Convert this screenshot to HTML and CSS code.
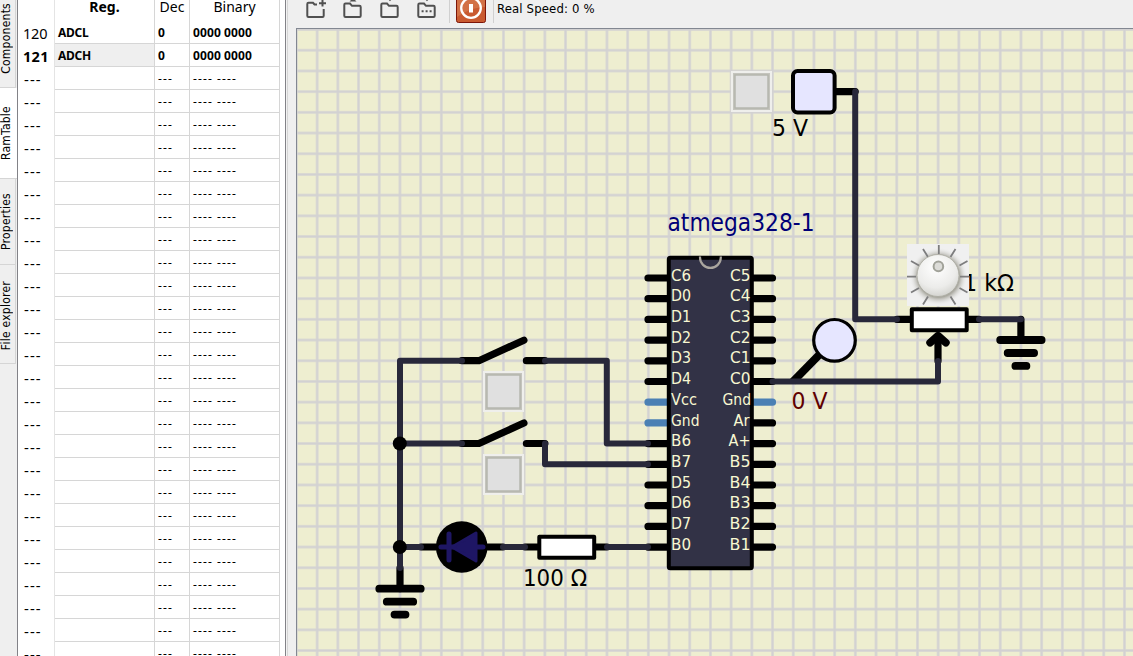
FILE: index.html
```html
<!DOCTYPE html>
<html lang="en">
<head>
<meta charset="utf-8">
<title>Circuit simulator</title>
<link rel="stylesheet" href="styles.css">
</head>
<body>
<div class="app">
  <nav class="tabs">
    <div class="tab components"><span>Components</span></div>
    <div class="tab active"><span>RamTable</span></div>
    <div class="tab properties"><span>Properties</span></div>
    <div class="tab files"><span>File explorer</span></div>
  </nav>
  <section class="ram">
    <div class="row head"><span></span><span class="strong">Reg.</span><span>Dec</span><span>Binary</span></div>
    <div class="row value"><span>120</span><span>ADCL</span><span>0</span><span>0000 0000</span></div>
    <div class="row value current"><span>121</span><span>ADCH</span><span>0</span><span>0000 0000</span></div>
    <div class="row"><span>---</span><span></span><span>---</span><span>---- ----</span></div>
    <div class="row"><span>---</span><span></span><span>---</span><span>---- ----</span></div>
    <div class="row"><span>---</span><span></span><span>---</span><span>---- ----</span></div>
    <div class="row"><span>---</span><span></span><span>---</span><span>---- ----</span></div>
    <div class="row"><span>---</span><span></span><span>---</span><span>---- ----</span></div>
    <div class="row"><span>---</span><span></span><span>---</span><span>---- ----</span></div>
    <div class="row"><span>---</span><span></span><span>---</span><span>---- ----</span></div>
    <div class="row"><span>---</span><span></span><span>---</span><span>---- ----</span></div>
    <div class="row"><span>---</span><span></span><span>---</span><span>---- ----</span></div>
    <div class="row"><span>---</span><span></span><span>---</span><span>---- ----</span></div>
    <div class="row"><span>---</span><span></span><span>---</span><span>---- ----</span></div>
    <div class="row"><span>---</span><span></span><span>---</span><span>---- ----</span></div>
    <div class="row"><span>---</span><span></span><span>---</span><span>---- ----</span></div>
    <div class="row"><span>---</span><span></span><span>---</span><span>---- ----</span></div>
    <div class="row"><span>---</span><span></span><span>---</span><span>---- ----</span></div>
    <div class="row"><span>---</span><span></span><span>---</span><span>---- ----</span></div>
    <div class="row"><span>---</span><span></span><span>---</span><span>---- ----</span></div>
    <div class="row"><span>---</span><span></span><span>---</span><span>---- ----</span></div>
    <div class="row"><span>---</span><span></span><span>---</span><span>---- ----</span></div>
    <div class="row"><span>---</span><span></span><span>---</span><span>---- ----</span></div>
    <div class="row"><span>---</span><span></span><span>---</span><span>---- ----</span></div>
    <div class="row"><span>---</span><span></span><span>---</span><span>---- ----</span></div>
    <div class="row"><span>---</span><span></span><span>---</span><span>---- ----</span></div>
    <div class="row"><span>---</span><span></span><span>---</span><span>---- ----</span></div>
    <div class="row"><span>---</span><span></span><span>---</span><span>---- ----</span></div>
    <div class="row"><span>---</span><span></span><span>---</span><span>---- ----</span></div>
  </section>
  <div class="splitter"></div>
  <main class="work">
    <header class="toolbar">
      <svg class="tool" viewBox="0 0 20 20"><path d="M11 4.5H8.5L7 2.8H2.5Q1.3 2.8 1.3 4V15.8Q1.3 17 2.5 17H16.5Q17.7 17 17.7 15.8V9M13 3.2H20M16.5 0V6.5"/></svg>
      <svg class="tool" viewBox="0 0 20 20"><path d="M2.5 3.5H7L9 5.8H16.5Q17.7 5.8 17.7 7V15.8Q17.7 17 16.5 17H2.5Q1.3 17 1.3 15.8V4.7Q1.3 3.5 2.5 3.5Z"/><path class="solid" d="M6.5 1.5L10 -2L13.5 1.5Z"/></svg>
      <svg class="tool" viewBox="0 0 20 20"><path d="M2.5 3.5H7L9 5.8H16.5Q17.7 5.8 17.7 7V15.8Q17.7 17 16.5 17H2.5Q1.3 17 1.3 15.8V4.7Q1.3 3.5 2.5 3.5Z"/><path class="solid" d="M8 -1H12L10 1.3Z"/></svg>
      <svg class="tool" viewBox="0 0 20 20"><path d="M2.5 3.5H7L9 5.8H16.5Q17.7 5.8 17.7 7V15.8Q17.7 17 16.5 17H2.5Q1.3 17 1.3 15.8V4.7Q1.3 3.5 2.5 3.5Z"/><path class="solid" d="M8 -1H12L10 1.3ZM4.6 10.3h2v2h-2ZM8.6 10.3h2v2h-2ZM12.6 10.3h2v2h-2Z"/></svg>
      <i class="divider"></i>
      <svg class="power" viewBox="0 0 30 23"><rect x=".5" y="-7" width="29" height="29.5" rx="2" fill="#c95a30" stroke="#7c1508"/><path d="M1 -6H29V7Q15 7 1 17Z" fill="#d98055" opacity=".6"/><circle cx="15" cy="8" r="9.8" fill="none" stroke="#fff" stroke-width="2.3"/><path d="M15 4V12.5" stroke="#fff" stroke-width="4"/></svg>
      <i class="divider second"></i>
      <span class="speed">Real Speed: 0 %</span>
    </header>
    <svg class="circuit" viewBox="297 29 836 627">
      <defs>
        <pattern id="grid" x="389.6" y="536.7" width="20.7" height="20.7" patternUnits="userSpaceOnUse">
          <path d="M10.35 0V20.7M0 10.35H20.7" stroke="#e3e2d2" stroke-width="3"/>
          <path d="M10.35 0V20.7M0 10.35H20.7" stroke="#d2d1d2" stroke-width="2"/>
        </pattern>
        <radialGradient id="dial" cx=".45" cy=".3" r=".75"><stop offset="0" stop-color="#fff"/><stop offset=".65" stop-color="#ececea"/><stop offset="1" stop-color="#cfcfca"/></radialGradient>
        <radialGradient id="shade"><stop offset=".72" stop-color="#aaa9a0"/><stop offset="1" stop-color="#efefef" stop-opacity="0"/></radialGradient>
        <g id="button"><rect width="41" height="41" fill="#efefec"/><rect x="3" y="3" width="35" height="35" fill="#e0e0e0" stroke="#c4c4bd" stroke-width="2"/><rect x="4" y="4" width="33" height="33" fill="none" stroke="#b3b4ab" stroke-width="1.4"/></g>
        <g id="ground" class="lead"><path d="M0 0V20.7"/><path class="bar" d="M-20.7 20.7H20.7M-13.2 33.7H13.2M-5.5 46.6H5.5"/></g>
        <g id="contact" class="lead"><path d="M0 0H17L62 -20.5M64.5 0H83"/></g>
      </defs>
      <rect x="297" y="29" width="836" height="627" fill="#eeeed0"/>
      <rect x="297" y="29" width="836" height="627" fill="url(#grid)"/>

      <use href="#button" x="731" y="71"/>
      <use href="#button" x="483" y="371"/>
      <use href="#button" x="483" y="454"/>

      <g class="lead">
        <path d="M836 91.6H855.2M897 319.3H911M967 319.3H979M938 361V338"/>
        <path class="bar" d="M930.2 342.6L938 335.8L945.8 342.6"/>
        <path d="M421 547H436M486 547H503M525 547H538M595 547H607"/>
        <path d="M648 278H667M648 298.7H667M648 319.4H667M648 340.1H667M648 360.8H667M648 381.5H667M648 443.6H667M648 464.3H667M648 485H667M648 505.7H667M648 526.4H667M648 547.1H667"/>
        <path d="M753 278H772.5M753 298.7H772.5M753 319.4H772.5M753 340.1H772.5M753 360.8H772.5M753 381.5H772.5M753 422.9H772.5M753 443.6H772.5M753 464.3H772.5M753 485H772.5M753 505.7H772.5M753 526.4H772.5M753 547.1H772.5"/>
        <path class="supply" d="M648 402.2H667M648 422.9H667M753 402.2H772.5"/>
      </g>
      <use href="#ground" x="400" y="568"/>
      <use href="#ground" x="1020.9" y="319.3"/>
      <use href="#contact" x="461.9" y="360.7"/>
      <use href="#contact" x="461.9" y="443.5"/>
      <path d="M820 354L793 381.5" stroke="#000" stroke-width="8"/>

      <g class="wire">
        <path d="M855.2 91.6V319.3H897M979 319.3H1020.9M938 361V381.5H772.5"/>
        <path d="M462 360.7H400V568M400 443.5H462M400 547H421M503 547H525M607 547H648"/>
        <path d="M545 360.7H606.8V443.5H648M545 443.5V464.2H648"/>
      </g>
      <circle cx="399.8" cy="443.5" r="7"/>
      <circle cx="399.8" cy="547" r="7"/>

      <rect class="part" x="793" y="71" width="41.6" height="41.4" rx="4.5" fill="#e6e6ff"/>
      <circle cx="834.5" cy="340.3" r="20.8" fill="#e6e6ff" stroke="#000" stroke-width="3.2"/>
      <rect class="part" x="911.8" y="309.3" width="54.9" height="20.9" fill="#fff"/>
      <rect class="part" x="539.3" y="536.8" width="54.9" height="20.9" fill="#fff"/>
      <circle cx="461.7" cy="547" r="25.8"/>
      <g fill="#1e1664" stroke="#1e1664" stroke-width="5" stroke-linecap="round" stroke-linejoin="round"><path d="M441 547H483M449 534V560"/><path stroke-width="3" d="M452 547L476 533V561Z"/></g>

      <rect class="part" x="668.8" y="257.8" width="83" height="310.4" rx="1.5" fill="#323246"/>
      <path d="M700 256.5V257.5A10.3 10.3 0 0 0 720.8 257.5V256.5" fill="none" stroke="#aaa69f" stroke-width="2.2"/>
      <g class="pin">
        <text x="671" y="280.6" textLength="20" lengthAdjust="spacingAndGlyphs">C6</text><text x="671" y="301" textLength="20" lengthAdjust="spacingAndGlyphs">D0</text><text x="671" y="322" textLength="20" lengthAdjust="spacingAndGlyphs">D1</text><text x="671" y="342.6" textLength="20" lengthAdjust="spacingAndGlyphs">D2</text><text x="671" y="363" textLength="20" lengthAdjust="spacingAndGlyphs">D3</text><text x="671" y="384" textLength="20" lengthAdjust="spacingAndGlyphs">D4</text><text x="671" y="405" textLength="26" lengthAdjust="spacingAndGlyphs">Vcc</text><text x="671" y="425.6" textLength="28.5" lengthAdjust="spacingAndGlyphs">Gnd</text><text x="671" y="446" textLength="20" lengthAdjust="spacingAndGlyphs">B6</text><text x="671" y="467" textLength="20" lengthAdjust="spacingAndGlyphs">B7</text><text x="671" y="487.6" textLength="20" lengthAdjust="spacingAndGlyphs">D5</text><text x="671" y="508" textLength="20" lengthAdjust="spacingAndGlyphs">D6</text><text x="671" y="529" textLength="20" lengthAdjust="spacingAndGlyphs">D7</text><text x="671" y="550" textLength="20" lengthAdjust="spacingAndGlyphs">B0</text>
        <text x="730" y="280.6" textLength="20.5" lengthAdjust="spacingAndGlyphs">C5</text><text x="730" y="301" textLength="20.5" lengthAdjust="spacingAndGlyphs">C4</text><text x="730" y="322" textLength="20.5" lengthAdjust="spacingAndGlyphs">C3</text><text x="730" y="342.6" textLength="20.5" lengthAdjust="spacingAndGlyphs">C2</text><text x="730" y="363" textLength="20.5" lengthAdjust="spacingAndGlyphs">C1</text><text x="730" y="384" textLength="20.5" lengthAdjust="spacingAndGlyphs">C0</text><text x="722.5" y="405" textLength="28.5" lengthAdjust="spacingAndGlyphs">Gnd</text><text x="733.5" y="425.6" textLength="16" lengthAdjust="spacingAndGlyphs">Ar</text><text x="728.5" y="446" textLength="22" lengthAdjust="spacingAndGlyphs">A+</text><text x="729.5" y="467" textLength="21" lengthAdjust="spacingAndGlyphs">B5</text><text x="729.5" y="487.6" textLength="21" lengthAdjust="spacingAndGlyphs">B4</text><text x="729.5" y="508" textLength="21" lengthAdjust="spacingAndGlyphs">B3</text><text x="729.5" y="529" textLength="21" lengthAdjust="spacingAndGlyphs">B2</text><text x="729.5" y="550" textLength="21" lengthAdjust="spacingAndGlyphs">B1</text>
      </g>
      <g class="label">
        <text class="name" x="667.5" y="230.6" textLength="147" lengthAdjust="spacingAndGlyphs">atmega328-1</text>
        <text x="772" y="136" textLength="36" lengthAdjust="spacingAndGlyphs">5 V</text>
        <text class="reading" x="791.5" y="408.5" textLength="36" lengthAdjust="spacingAndGlyphs">0 V</text>
        <text x="523" y="586" textLength="64" lengthAdjust="spacingAndGlyphs">100 Ω</text>
        <text x="963" y="290.6" textLength="51" lengthAdjust="spacingAndGlyphs">1 kΩ</text>
      </g>

      <rect x="907" y="244" width="62" height="62" fill="#f0f0f0"/>
      <circle cx="938.5" cy="276.5" r="29" fill="url(#shade)"/>
      <path d="M938.8 245V254M923 249L928 257M955.5 249L950.5 257M911 261L919 265.5M967.5 261L959.5 265.5M907 276.7H916M969 276.7H960M911 292.5L919 288M967.5 292.5L959.5 288M923 304.5L928 296.5M955.5 304.5L950.5 296.5" stroke="#7d7d7e" stroke-width="1.8"/>
      <circle cx="938" cy="275.5" r="21" fill="url(#dial)" stroke="#a9a9a0" stroke-width=".8"/>
      <circle cx="938.4" cy="266.4" r="4.8" fill="#dcdcd8" stroke="#a1a299" stroke-width="2"/>
    </svg>
  </main>
</div>
</body>
</html>
```
FILE: styles.css
```css
* { box-sizing: border-box; }
body {
  margin: 0;
  overflow: hidden;
  background: #efefef;
  color: #000;
  font-family: "Noto Sans", "Open Sans", sans-serif;
}
.app { display: flex; width: 1133px; height: 656px; overflow: hidden; }

.tabs { width: 17px; flex: none; display: flex; flex-direction: column; background: #efefef; }
.tab {
  width: 16px;
  flex: none;
  display: flex;
  align-items: center;
  justify-content: center;
  padding-right: 2px;
  border-right: 1px solid #d5d5d5;
  border-bottom: 1px solid #d5d5d5;
  font-family: "DejaVu Sans Condensed", "DejaVu Sans", sans-serif;
  font-stretch: condensed;
  font-size: 12px;
  line-height: 13px;
  letter-spacing: .25px;
}
.tab span { writing-mode: vertical-rl; transform: rotate(180deg); white-space: nowrap; }
.components { height: 88px; padding-bottom: 10px; }
.active { width: 17px; height: 91px; background: #fff; border-right: 0; padding-right: 4px; }
.properties { height: 86px; }
.files { height: 99px; padding-top: 3px; }

.ram {
  width: 269px;
  flex: none;
  height: 656px;
  overflow: hidden;
  background: #fff;
  border: solid #828287;
  border-width: 0 1px;
}
.row {
  display: grid;
  grid-template-columns: 37px 100px 35px 90px;
  height: 23px;
  font-size: 12px;
  line-height: 21px;
  white-space: pre;
}
.row span { border-right: 1px solid #d6d6d6; border-bottom: 1px solid #d6d6d6; padding: 1px 0 0 3px; letter-spacing: 1.1px; }
.row span:first-child {
  height: 23px;
  border-bottom: 0;
  padding: 2px 0 0 6px;
  border-color: #e4e4e4;
  font-size: 15px;
  letter-spacing: 1.1px;
}
.row.value span { font-weight: 700; letter-spacing: .1px; }
.row.value span:nth-child(2) { letter-spacing: -.3px; }
.row.value span:first-child { font-weight: 400; font-size: 14.5px; letter-spacing: -.2px; padding-left: 5px; }
.row.value.current span:first-child { font-weight: 700; letter-spacing: .3px; }
.row.current span:nth-child(2) { background: #efefef; }
.row.head { height: 21px; font-size: 14px; line-height: 13px; }
.row.head span { height: 21px; border-bottom: 0; padding: 0; text-align: center; letter-spacing: 0; }
.row.head .strong { font-weight: 700; }

.splitter { width: 10px; flex: none; border-left: 1px solid #f2f2f2; box-shadow: inset 1px 0 #d5d5d5; }
.work { width: 837px; flex: none; }
.toolbar { height: 28px; display: flex; align-items: flex-start; padding-left: 10px; }
.tool { width: 20px; height: 20px; flex: none; margin-right: 17px; fill: none; stroke: #505050; stroke-width: 2; overflow: hidden; }
.tool .solid { fill: #505050; stroke: none; }
.divider { width: 1px; height: 23px; margin-left: -5px; background: #d0d0d0; }
.divider.second { margin-left: 7px; }
.power { width: 30px; height: 23px; margin-left: 6px; flex: none; }
.speed {
  margin-left: 3px;
  font-family: "DejaVu Sans Condensed", "DejaVu Sans", sans-serif;
  font-stretch: condensed;
  font-size: 13px;
  line-height: 17px;
  letter-spacing: .15px;
  white-space: nowrap;
}

.circuit { display: block; width: 837px; height: 628px; border: solid #828791; border-width: 1px 0 0 1px; }
.circuit .lead path { fill: none; stroke: #000; stroke-width: 7.2; stroke-linecap: round; stroke-linejoin: round; }
.circuit .lead .bar { stroke-width: 7.8; }
.circuit .lead .supply { stroke: #4b80b4; }
.wire path { fill: none; stroke: #28283a; stroke-width: 6; stroke-linecap: round; stroke-linejoin: round; }
.part { stroke: #000; stroke-width: 4; stroke-linejoin: round; }
.circuit text { font-family: "DejaVu Sans Condensed", "DejaVu Sans", sans-serif; font-stretch: condensed; }
.pin { fill: #f8f8d2; font-size: 15px; }
.label { fill: #000; font-size: 22.5px; }
.label .name { fill: #000078; font-size: 24.5px; }
.label .reading { fill: #600000; }
```
